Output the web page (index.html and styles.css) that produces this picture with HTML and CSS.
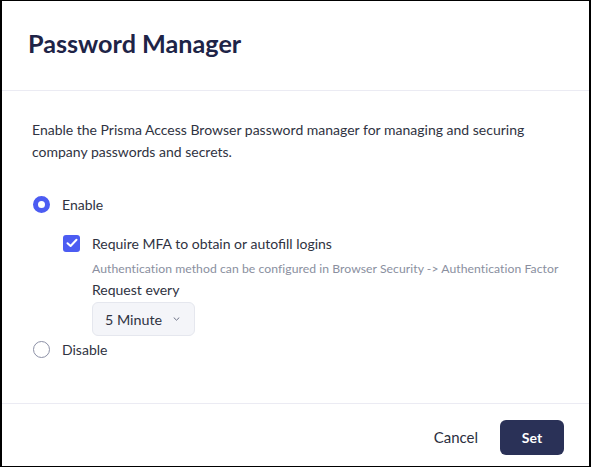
FILE: index.html
```html
<!DOCTYPE html>
<html>
<head>
<meta charset="utf-8">
<link rel="stylesheet" href="styles.css">
</head>
<body>
<div class="modal">
  <div class="modal-header">
    <h1 class="title">Password Manager</h1>
  </div>
  <div class="modal-body">
    <p class="desc">Enable the Prisma Access Browser password manager for managing and securing company passwords and secrets.</p>
    <div class="option">
      <span class="radio radio-on"></span>
      <span class="option-label">Enable</span>
    </div>
    <div class="sub">
      <div class="check-row">
        <span class="checkbox">
          <svg width="12" height="10" viewBox="0 0 12 10"><path d="M1.5 5.2 L4.6 8 L10.5 1.8" fill="none" stroke="#fff" stroke-width="2" stroke-linecap="round" stroke-linejoin="round"/></svg>
        </span>
        <span class="check-label">Require MFA to obtain or autofill logins</span>
      </div>
      <div class="sub-inner">
        <div class="hint">Authentication method can be configured in Browser Security -&gt; Authentication Factor</div>
        <div class="field-label">Request every</div>
        <div class="select">
          <span>5 Minute</span>
          <svg width="7" height="4" viewBox="0 0 7 4"><path d="M1 0.8 L3.5 3.2 L6 0.8" fill="none" stroke="#6b7185" stroke-width="1" stroke-linecap="round" stroke-linejoin="round"/></svg>
        </div>
      </div>
    </div>
    <div class="option option-disable">
      <span class="radio"></span>
      <span class="option-label">Disable</span>
    </div>
  </div>
  <div class="modal-footer">
    <button class="btn btn-text">Cancel</button>
    <button class="btn btn-primary">Set</button>
  </div>
</div>
</body>
</html>
```

FILE: styles.css
```css
* { box-sizing: border-box; }
html, body { margin: 0; padding: 0; }
body {
  font-family: Lato, "Open Sans", sans-serif;
  color: #2b2f3e;
  background: #fff;
}
.modal {
  width: 591px;
  height: 467px;
  border-style: solid;
  border-color: #000;
  border-width: 1px 2px 1px 2px;
  display: flex;
  flex-direction: column;
  background: #fff;
}
.modal-header {
  height: 90px;
  border-bottom: 1px solid #ebebf3;
  padding: 0 0 0 26px;
  display: flex;
  align-items: center;
}
.title {
  margin: 0;
  font-size: 25.2px;
  font-weight: 700;
  color: #1e2447;
  padding-bottom: 5px;
}
.modal-body {
  flex: 1;
  padding: 28px 30px 0 30px;
  border-bottom: 1px solid #ebebf3;
}
.desc {
  margin: 0 0 30px 0;
  font-size: 14px;
  line-height: 22px;
  color: #2f3342;
}
.option {
  display: flex;
  align-items: center;
  height: 22px;
}
.radio {
  width: 17px;
  height: 17px;
  border-radius: 50%;
  border: 1.5px solid #8c90a6;
  margin-left: 1px;
  background: #fff;
}
.radio-on {
  border: 5px solid #4c5cf2;
}
.option-label {
  margin-left: 12px;
  font-size: 14px;
  color: #2f3342;
}
.sub {
  padding-left: 31px;
  padding-top: 18px;
}
.check-row {
  display: flex;
  align-items: center;
  height: 20px;
}
.checkbox {
  width: 17px;
  height: 17px;
  border-radius: 3px;
  background: #4c5cf2;
  display: flex;
  align-items: center;
  justify-content: center;
}
.check-label {
  margin-left: 12px;
  font-size: 14px;
  color: #2f3342;
}
.sub-inner {
  padding-left: 29px;
  padding-top: 8px;
}
.hint {
  font-size: 12.2px;
  letter-spacing: 0.05px;
  color: #8a8fa0;
  line-height: 16px;
}
.field-label {
  font-size: 14px;
  color: #2f3342;
  line-height: 20px;
  margin-top: 3px;
}
.select {
  width: 103px;
  height: 34px;
  margin-top: 2px;
  background: #f4f5f9;
  border: 1px solid #e5e7ee;
  border-radius: 6px;
  display: flex;
  align-items: center;
  justify-content: space-between;
  padding: 0 14px 0 12px;
  font-size: 14.3px;
  color: #2f3342;
}
.option-disable {
  margin-top: 2px;
}
.modal-footer {
  height: 62px;
  display: flex;
  align-items: flex-start;
  justify-content: flex-end;
  padding: 16px 25px 0 0;
  gap: 22px;
}
.btn {
  font-family: Lato, "Open Sans", sans-serif;
  font-size: 14px;
  border: none;
  cursor: pointer;
}
.btn-text {
  background: none;
  color: #2b2f3e;
  height: 34px;
  padding: 0;
  font-size: 15px;
}
.btn-primary {
  width: 64px;
  height: 35px;
  background: #2a3157;
  color: #fff;
  font-weight: 700;
  border-radius: 6px;
}
```
